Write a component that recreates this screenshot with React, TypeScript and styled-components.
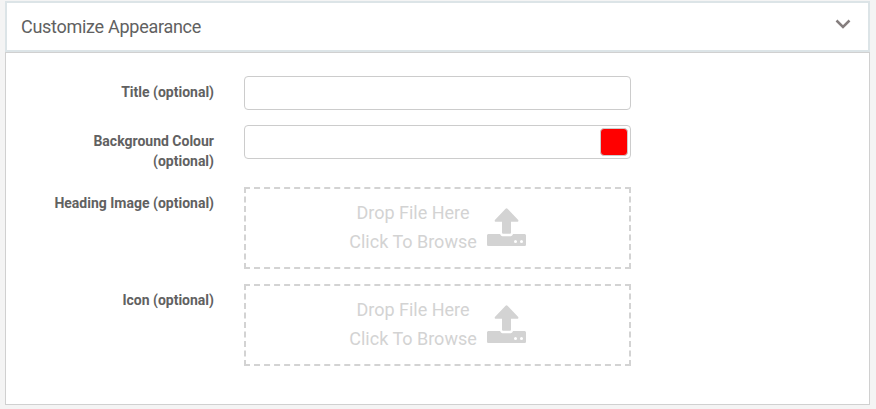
import styled, { createGlobalStyle } from "styled-components";

const GlobalStyle = createGlobalStyle`
  * { box-sizing: border-box; }
  body {
    margin: 0;
    background: #f4f4f4;
    color: #616161;
    font-family: Roboto, "Liberation Sans", sans-serif;
    font-size: 14px;
    line-height: 20px;
  }
`;

const Page = styled.main`
  height: 409px;
  padding: 1px 6px 4px 5px;
  display: flex;
  flex-direction: column;
`;

const Header = styled.header`
  height: 51px;
  flex: none;
  display: flex;
  align-items: center;
  justify-content: space-between;
  padding: 0 17px 0 14px;
  background: #fff;
  border: 2px solid #dce4e7;
`;

const Heading = styled.h1`
  margin: 0;
  font-size: 18px;
  font-weight: 400;
  line-height: 24px;
  letter-spacing: -0.28px;
`;

const Chevron = styled.svg`
  width: 16px;
  height: 10px;
  margin-bottom: 5px;
  fill: none;
  stroke: #857e7e;
  stroke-width: 2.5;
`;

const Panel = styled.form`
  flex: 1;
  display: flex;
  flex-direction: column;
  gap: 15px;
  padding: 23px 0 0 14px;
  background: #fff;
  border: 1px solid #d0d0d0;
`;

const Row = styled.div`
  display: grid;
  grid-template-columns: 194px 387px;
  column-gap: 30px;
  align-items: start;
`;

const Label = styled.label`
  padding: 6px 0 1px 30px;
  text-align: right;
  font-weight: 700;
`;

const Field = styled.div`
  height: 34px;
  display: flex;
  align-items: center;
  padding-right: 2px;
  border: 1px solid #ccc;
  border-radius: 4px;
  background: #fff;
`;

const Input = styled.input`
  flex: 1;
  min-width: 0;
  height: 100%;
  padding: 0 12px;
  border: 0;
  outline: 0;
  background: transparent;
  font: inherit;
  color: inherit;
`;

const Swatch = styled.span<{ $color: string }>`
  width: 28px;
  height: 28px;
  border: 1px solid #ccc;
  border-radius: 4px;
  background: ${(p) => p.$color};
`;

const DropZone = styled.div`
  height: 82px;
  display: flex;
  align-items: center;
  justify-content: center;
  gap: 10px;
  padding-bottom: 2px;
  border: 2px dashed #d3d3d3;
  color: #d3d3d3;
`;

const DropText = styled.div`
  font-size: 18px;
  line-height: 29px;
  text-align: center;
`;

const UploadIcon = styled.svg`
  width: 39px;
  height: 39px;
  fill: currentColor;
`;

function FileDrop() {
  return (
    <DropZone>
      <DropText>
        Drop File Here
        <br />
        Click To Browse
      </DropText>
      <UploadIcon viewBox="0 0 39 39">
        <path d="M18.6.7a1.3 1.3 0 0 1 1.9 0L31 11.7c.8.8.4 2-.8 2H24v10.8c0 .8-.6 1.3-1.3 1.3h-6.3c-.8 0-1.4-.5-1.4-1.3V13.7H8.8c-1.1 0-1.5-1.2-.7-2z" />
        <path
          fillRule="evenodd"
          d="M1.6 26h11.5c.4 1.500 1.600 2.300 3.200 2.300h6.500c1.600 0 2.800-.8 3.200-2.300h11.400c.9 0 1.600.7 1.600 1.600v8.900c0 .9-.7 1.600-1.600 1.600H1.600C.7 38.100 0 37.400 0 36.500v-8.900C0 26.700.7 26 1.600 26zM27 33.500a1.500 1.500 0 1 0 3 0 1.500 1.500 0 0 0-3 0zm6 0a1.500 1.500 0 1 0 3 0 1.500 1.500 0 0 0-3 0z"
        />
      </UploadIcon>
    </DropZone>
  );
}

export default function App() {
  return (
    <>
      <GlobalStyle />
      <Page>
        <Header>
          <Heading>Customize Appearance</Heading>
          <Chevron viewBox="0 0 16 10">
            <path d="M1.5 1.5 8 8l6.5-6.5" />
          </Chevron>
        </Header>
        <Panel>
          <Row>
            <Label htmlFor="title">Title (optional)</Label>
            <Field>
              <Input id="title" />
            </Field>
          </Row>
          <Row>
            <Label htmlFor="colour">Background Colour (optional)</Label>
            <Field>
              <Input id="colour" />
              <Swatch $color="#ff0000" />
            </Field>
          </Row>
          <Row>
            <Label as="span">Heading Image (optional)</Label>
            <FileDrop />
          </Row>
          <Row>
            <Label as="span">Icon (optional)</Label>
            <FileDrop />
          </Row>
        </Panel>
      </Page>
    </>
  );
}
